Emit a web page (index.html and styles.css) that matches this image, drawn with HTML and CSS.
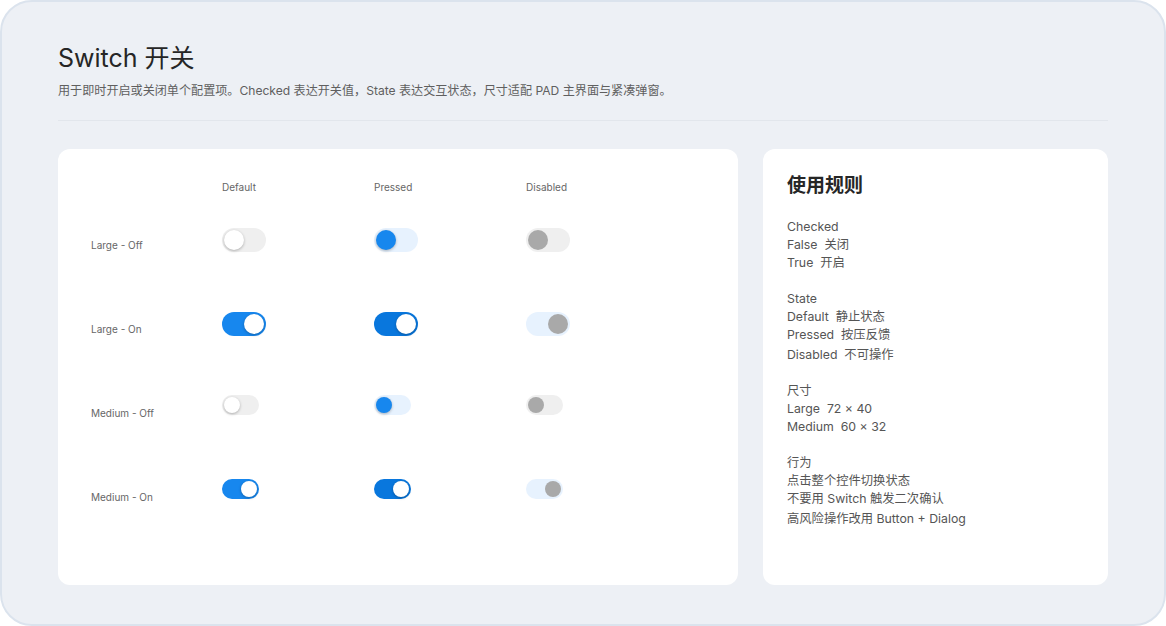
FILE: index.html
```html
<!DOCTYPE html>
<html lang="zh-CN">
<head>
    <meta charset="UTF-8">
    <meta name="viewport" content="width=device-width, initial-scale=1.0">
    <title>Switch 开关</title>
    <link rel="stylesheet" href="styles.css">
</head>
<body>
    <div class="page">
        <header class="page-header">
            <h1 class="page-title">Switch 开关</h1>
            <p class="page-desc">用于即时开启或关闭单个配置项。Checked 表达开关值，State 表达交互状态，尺寸适配 PAD 主界面与紧凑弹窗。</p>
        </header>

        <div class="content">
            <section class="card matrix">
                <div class="matrix-grid">
                    <div class="col-head"></div>
                    <div class="col-head">Default</div>
                    <div class="col-head">Pressed</div>
                    <div class="col-head">Disabled</div>

                    <div class="row-label">Large - Off</div>
                    <div class="cell"><span class="switch large"><i class="thumb"></i></span></div>
                    <div class="cell"><span class="switch large pressed"><i class="thumb"></i></span></div>
                    <div class="cell"><span class="switch large disabled"><i class="thumb"></i></span></div>

                    <div class="row-label">Large - On</div>
                    <div class="cell"><span class="switch large on"><i class="thumb"></i></span></div>
                    <div class="cell"><span class="switch large on pressed"><i class="thumb"></i></span></div>
                    <div class="cell"><span class="switch large on disabled"><i class="thumb"></i></span></div>

                    <div class="row-label">Medium - Off</div>
                    <div class="cell"><span class="switch medium"><i class="thumb"></i></span></div>
                    <div class="cell"><span class="switch medium pressed"><i class="thumb"></i></span></div>
                    <div class="cell"><span class="switch medium disabled"><i class="thumb"></i></span></div>

                    <div class="row-label">Medium - On</div>
                    <div class="cell"><span class="switch medium on"><i class="thumb"></i></span></div>
                    <div class="cell"><span class="switch medium on pressed"><i class="thumb"></i></span></div>
                    <div class="cell"><span class="switch medium on disabled"><i class="thumb"></i></span></div>
                </div>
            </section>

            <aside class="card rules">
                <h2 class="rules-title">使用规则</h2>
                <div class="rules-group">
                    <p>Checked</p>
                    <p>False&nbsp; 关闭</p>
                    <p>True&nbsp; 开启</p>
                </div>
                <div class="rules-group">
                    <p>State</p>
                    <p>Default&nbsp; 静止状态</p>
                    <p>Pressed&nbsp; 按压反馈</p>
                    <p>Disabled&nbsp; 不可操作</p>
                </div>
                <div class="rules-group">
                    <p>尺寸</p>
                    <p>Large&nbsp; 72 × 40</p>
                    <p>Medium&nbsp; 60 × 32</p>
                </div>
                <div class="rules-group">
                    <p>行为</p>
                    <p>点击整个控件切换状态</p>
                    <p>不要用 Switch 触发二次确认</p>
                    <p>高风险操作改用 Button + Dialog</p>
                </div>
            </aside>
        </div>
    </div>
</body>
</html>
```

FILE: styles.css
```css
* {
    margin: 0;
    padding: 0;
    box-sizing: border-box;
}

body {
    font-family: Inter, "Noto Sans CJK SC", sans-serif;
    background: #ffffff;
    color: #222;
}

.page {
    width: 1166px;
    height: 626px;
    border: 2px solid #dbe3ed;
    border-radius: 32px;
    background: #edf0f5;
    padding: 40px 56px 39px;
    display: flex;
    flex-direction: column;
}

.page-header {
    padding-bottom: 20px;
    border-bottom: 1px solid #e2e6ec;
    margin-bottom: 28px;
}

.page-title {
    font-size: 25px;
    line-height: 32px;
    font-weight: 400;
    color: #262626;
    margin-bottom: 8px;
}

.page-desc {
    font-size: 12.1px;
    line-height: 18px;
    color: #5f5f5f;
}

.content {
    flex: 1;
    display: flex;
    gap: 25px;
}

.card {
    background: #fff;
    border-radius: 12px;
}

/* switch matrix */
.matrix {
    width: 680px;
    padding: 30px 33px;
}

.matrix-grid {
    display: grid;
    grid-template-columns: 131px 152px 152px 152px;
    grid-template-rows: 24px repeat(4, 84px);
}

.col-head {
    font-size: 10px;
    line-height: 16px;
    color: #666;
}

.row-label {
    align-self: center;
    font-size: 10px;
    line-height: 16px;
    color: #666;
}

.cell {
    padding-top: 25px;
}

.switch {
    display: block;
    position: relative;
    border-radius: 999px;
    background: #efefef;
}

.switch.large {
    width: 44px;
    height: 24px;
}

.switch.medium {
    width: 37px;
    height: 20px;
    margin-top: -1px;
}

.thumb {
    position: absolute;
    top: 2px;
    left: 2px;
    border-radius: 50%;
    background: #fff;
    box-shadow: 0 1px 3px rgba(0, 0, 0, 0.28);
}

.large .thumb {
    width: 20px;
    height: 20px;
}

.medium .thumb {
    width: 16px;
    height: 16px;
}

.switch.on {
    background: #1787ee;
}

.large.on .thumb {
    left: 22px;
}

.medium.on .thumb {
    left: 19px;
}

.switch.pressed {
    background: #e7f2fe;
}

.switch.pressed .thumb {
    background: #1787ee;
}

.switch.on.pressed {
    background: #0977dd;
}

.switch.on.pressed .thumb {
    background: #fff;
}

.switch.disabled {
    background: #efefef;
}

.switch.on.disabled {
    background: #e7f2fe;
}

.switch.disabled .thumb {
    background: #a9a9a9;
    box-shadow: none;
}

/* usage notes */
.rules {
    flex: 1;
    padding: 24px 24px;
}

.rules-title {
    font-size: 19px;
    line-height: 26px;
    font-weight: 600;
    color: #262626;
    margin-bottom: 19px;
}

.rules-group {
    margin-bottom: 18px;
}

.rules-group p {
    font-size: 12.3px;
    line-height: 18px;
    color: #555;
}

.rules-group p:nth-child(4) {
    margin-top: 2px;
}
```
